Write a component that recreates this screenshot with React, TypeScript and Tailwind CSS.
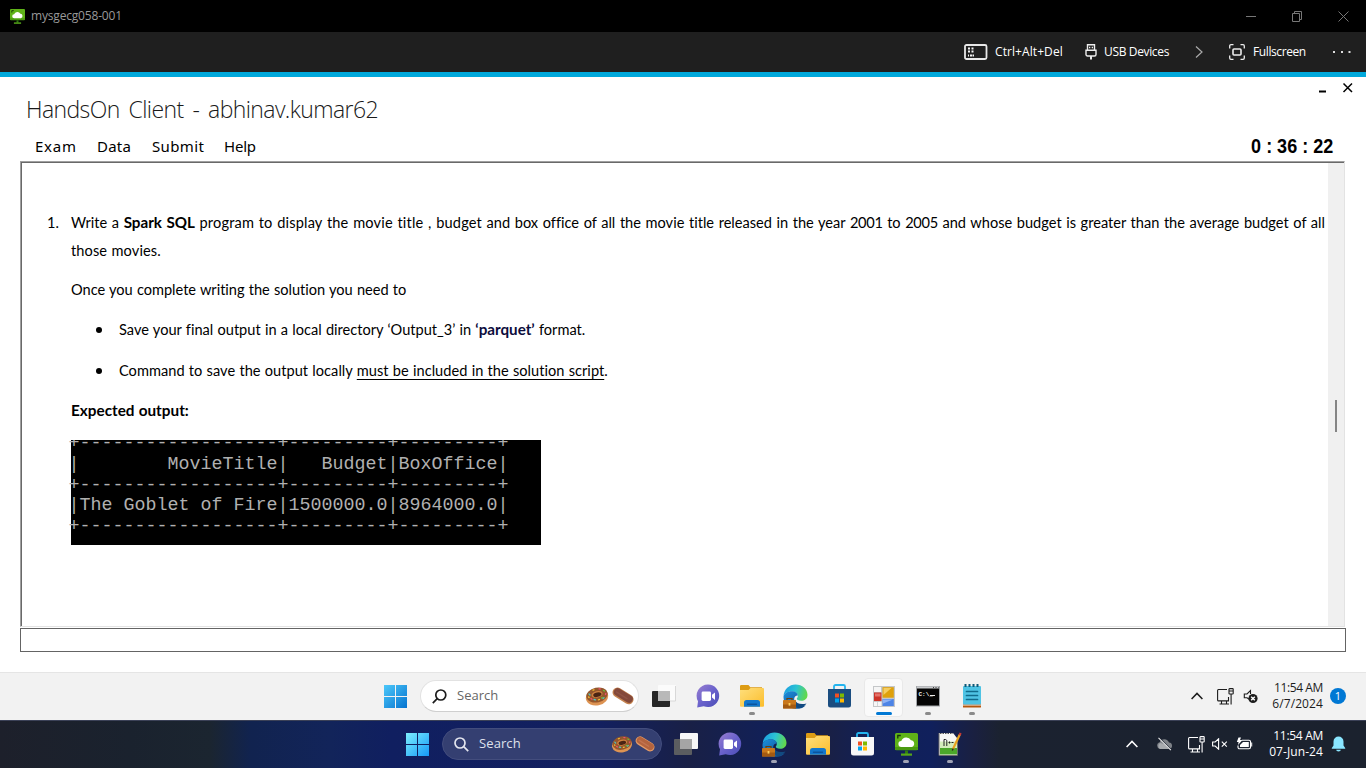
import React from "react";

type Dark = { dark?: boolean };

const WinLogo = ({ dark }: Dark) => {
  const id = dark ? "wl-d" : "wl-l";
  return (
    <svg width="23" height="23" viewBox="0 0 23 23">
      <defs>
        <linearGradient id={id} x1="0" y1="0" x2="1" y2="1" gradientUnits="objectBoundingBox">
          <stop offset="0" stopColor={dark ? "#7deefc" : "#4cc8fa"} />
          <stop offset="1" stopColor={dark ? "#1599f8" : "#0573cf"} />
        </linearGradient>
      </defs>
      <path fill={`url(#${id})`} d="M0 0h11v11H0zM12 0h11v11H12zM0 12h11v11H0zM12 12h11v11H12z" />
    </svg>
  );
};

const Donut = () => (
  <svg width="24" height="20" viewBox="0 0 24 20">
    <ellipse cx="12" cy="11" rx="11.300" ry="8.400" fill="#dd9352" transform="rotate(-12 12 11)" />
    <ellipse cx="12" cy="9" rx="10.800" ry="7.400" fill="#94562c" transform="rotate(-12 12 9)" />
    <ellipse cx="12.200" cy="8.400" rx="5.600" ry="3.300" fill="#cf8040" transform="rotate(-12 12 9)" />
    <ellipse cx="12.400" cy="8.800" rx="4.200" ry="2.200" fill="#4a2414" transform="rotate(-12 12 9)" />
    <g strokeWidth="1.300" strokeLinecap="round">
      <path stroke="#52c8c0" d="M4 8l1 1M9 13.500l1.500.3M18 12.500l1-.8" />
      <path stroke="#f0506e" d="M6 12.500l1 .8M14 2.800l1.200.2M20.500 8.500l.3-1" />
      <path stroke="#f2c230" d="M8 4.200l1-.4M13.500 13.800l1-.3M3.600 11l.5.5" />
      <path stroke="#6bbf3a" d="M18.500 4.500l1 .5M16.500 12l.8-.5" />
    </g>
  </svg>
);

const Eclair = ({ dark }: Dark) => (
  <svg width="24" height="20" viewBox="0 0 24 20">
    <rect x="0.500" y="5" width="23" height="9.800" rx="4.900" fill={dark ? "#e39a66" : "#c48350"} transform="rotate(32 12 10)" />
    <rect x="1.500" y="5.600" width="21" height="7.600" rx="3.800" fill={dark ? "#b4643e" : "#84493a"} transform="rotate(32 12 10)" />
    <path d="M5.500 6l10.500 6.600" stroke={dark ? "#c27450" : "#905445"} strokeWidth="1.400" strokeLinecap="round" />
  </svg>
);

const TaskView = ({ dark }: Dark) => (
  <svg width="24" height="23" viewBox="0 0 24 23">
    <rect x="6" y="0" width="18" height="16" rx="1" fill={dark ? "#f6f6f6" : "#fbfbfb"} />
    {!dark && <path d="M23.500 1v15H6" stroke="#d8d8d8" fill="none" />}
    <rect x="0" y="6" width="18" height="16" rx="1" fill={dark ? "#5b5d60" : "#272727"} />
    <rect x="6" y="6" width="12" height="10" fill={dark ? "#a5a5a5" : "#b9b9b9"} />
  </svg>
);

const Chat = ({ dark }: Dark) => {
  const id = dark ? "ch-d" : "ch-l";
  return (
    <svg width="24" height="24" viewBox="0 0 24 24">
      <defs>
        <linearGradient id={id} x1="0" y1="0" x2="1" y2="1">
          <stop offset="0" stopColor="#9a7fd0" />
          <stop offset=".5" stopColor="#6a62cc" />
          <stop offset="1" stopColor="#4a4db5" />
        </linearGradient>
      </defs>
      <path d="M12 .5a11.300 11.300 0 1 1-4.300 21.800L1.200 23.600 2 17.300A11.300 11.300 0 0 1 12 .5z" fill={`url(#${id})`} />
      <rect x="5.600" y="7.500" width="9.400" height="9.400" rx="1.400" fill="#fff" />
      <path d="M16 10.800l3-2.400v7.600l-3-2.400z" fill="#fff" />
    </svg>
  );
};

const Folder = ({ dark }: Dark) => {
  const id = dark ? "fo-d" : "fo-l";
  return (
    <svg width="24" height="22" viewBox="0 0 24 22">
      <defs>
        <linearGradient id={id} x1="0" y1="0" x2="1" y2="1">
          <stop offset="0" stopColor="#ffdf7c" />
          <stop offset="1" stopColor="#fbbd2c" />
        </linearGradient>
      </defs>
      <path d="M0 1.200A1.200 1.200 0 0 1 1.200 0h7.300l1.800 2.200H22v5H0z" fill="#dd9c14" />
      <path d="M0 5h8.600l1.900-2H23a1 1 0 0 1 1 1v16.800a1 1 0 0 1-1 1H1a1 1 0 0 1-1-1z" fill={`url(#${id})`} />
      <path d="M4 21.800v-4.300A2.500 2.500 0 0 1 6.500 15h11a2.500 2.500 0 0 1 2.500 2.500v4.300z" fill="#1377cc" />
      <path d="M7.500 19.300h9" stroke="#0c559d" strokeWidth="1.400" strokeLinecap="round" />
    </svg>
  );
};

const Edge = ({ dark }: Dark) => {
  const a = dark ? "ed-a1" : "ed-a2";
  const b = dark ? "ed-b1" : "ed-b2";
  return (
    <svg width="25" height="25" viewBox="0 0 25 25">
      <defs>
        <linearGradient id={a} x1="0" y1="0.300" x2="1" y2="0.500">
          <stop offset="0" stopColor="#1b9de2" />
          <stop offset=".5" stopColor="#2cc3d2" />
          <stop offset="1" stopColor="#63d948" />
        </linearGradient>
        <linearGradient id={b} x1="0" y1="0" x2="1" y2="1">
          <stop offset="0" stopColor="#1b8fdd" />
          <stop offset="1" stopColor="#114a8b" />
        </linearGradient>
      </defs>
      <path d="M.6 12A12 12 0 0 1 12.500.5c6.800 0 12 4.500 12 10.300 0 4-3 6-6.300 6-3 0-4.400-1.200-4.400-2 0-.6 1-1.200 1-3 0-2.400-2.500-4.300-6-4.300C5 7.500 1.500 9.500.6 12z" fill={`url(#${a})`} />
      <path d="M.5 12.500C1.200 9.500 4.800 7.300 8.800 7.300c3.500 0 6 2 6 4.200-3 0-4.300 2.700-3.300 5.500 1.200 3.500 5 5.200 8.400 5 1.200 0 2.300-.5 3-.8a12 12 0 0 1-9.900 3.500C5.500 24.500.2 19 .5 12.500z" fill={`url(#${b})`} />
      <path d="M12 15.500c1 4 5.500 5.500 11.500 4a12 12 0 0 1-7.500 4.800c-3-.8-5-4-4-8.800z" fill="#124a80" />
      <path d="M4 16v-1.500h5V16" stroke="#6f3f08" strokeWidth="1.200" fill="none" />
      <rect x="0" y="16" width="13" height="8.500" rx=".8" fill="#c9781c" />
      <path d="M0 20.500h13v4H0z" fill="#a35a12" />
      <rect x="5.600" y="19" width="1.800" height="2.600" fill="#ffcf5e" />
    </svg>
  );
};

const Store = ({ dark }: Dark) => (
  <svg width="23" height="24" viewBox="0 0 23 24">
    <path d="M6 6V2.500A1.500 1.500 0 0 1 7.500 1h8A1.500 1.500 0 0 1 17 2.500V6" stroke="#24b4ee" strokeWidth="1.800" fill="none" />
    <path d="M0 5h23v16a2.500 2.500 0 0 1-2.500 2.500h-18A2.500 2.500 0 0 1 0 21z" fill={dark ? "#f7f7f7" : "#1b4d80"} />
    <path d="M7 9.500h4v4H7z" fill="#f25022" />
    <path d="M12 9.500h4v4h-4z" fill="#7fba00" />
    <path d="M7 14.500h4v4H7z" fill="#00a4ef" />
    <path d="M12 14.500h4v4h-4z" fill="#ffb900" />
  </svg>
);

const FormsApp = () => (
  <svg width="22" height="21" viewBox="0 0 22 21">
    <rect width="22" height="21" fill="#c5c7c9" />
    <path d="M1 1h7v5H1z" fill="#f5f5f5" />
    <path d="M1 6.500h7.500v8.500H1z" fill="#cc3328" />
    <path d="M2 7.500h5.500v3H2z" fill="#e4736a" />
    <path d="M9.500 1.200h11.300v10.500H9.500z" fill="#dfa10c" />
    <path d="M10.500 2h8l-8 7z" fill="#f5cd61" />
    <path d="M9.500 13h11.300v7H9.500z" fill="#4d84e6" />
    <path d="M10 13.500h10l-10 4z" fill="#8fb3f5" />
    <path d="M1 16h3.300v4H1zM5 16h3.500v4H5z" fill="#f7f7f7" />
  </svg>
);

const Cmd = () => (
  <svg width="24" height="21" viewBox="0 0 24 21">
    <rect x=".5" y=".5" width="23" height="19.500" fill="#050505" stroke="#a3a6a9" />
    <path d="M1 1.500h22" stroke="#c9cbcd" strokeWidth="2" />
    <path d="M17 1.500h1M19.500 1.500h1M22 1.500h.6" stroke="#444" />
    <text x="2.500" y="9.500" fontSize="6" fontWeight="700" fontFamily="Liberation Mono, monospace" fill="#f5f5f5">C:\_</text>
    <path d="M14 9.500h5" stroke="#eee" strokeWidth="1" />
  </svg>
);

const Notepad = () => (
  <svg width="20" height="24" viewBox="0 0 20 24">
    <rect x="1" y="19" width="18" height="4.600" rx=".5" fill="#b4560e" />
    <path d="M1 20.500h18v1H1z" fill="#f5f0ec" />
    <rect x="1" y="2" width="18" height="18.500" rx="1" fill="#4fc3e4" />
    <path d="M3.500 0v3M7.500 0v3M11.500 0v3M15.500 0v3" stroke="#0f5a79" strokeWidth="2" />
    <path d="M4.500 7.500h11M4.500 11.500h11M4.500 15.500h11" stroke="#116b8c" strokeWidth="1.700" strokeLinecap="round" />
  </svg>
);

const CloudMonitor = ({ size }: { size: number }) => (
  <svg width={size} height={size} viewBox="0 0 23 23">
    <path d="M0 1.500A1.500 1.500 0 0 1 1.500 0h20A1.500 1.500 0 0 1 23 1.500V17H0z" fill="#5fb318" />
    <path d="M0 14h23v1.800a1.500 1.500 0 0 1-1.500 1.500h-20A1.500 1.500 0 0 1 0 15.800z" fill="#4a9a10" />
    <path d="M2.800 5.500V2.500h3" stroke="#17360a" strokeWidth="1.300" fill="none" />
    <path d="M10 17.500h3V21h-3z" fill="#2f7d10" />
    <path d="M6 20.500h11v2.200H6z" fill="#56a818" />
    <path d="M6.500 14a3 3 0 0 1-.2-6A5.400 5.400 0 0 1 16 7.200a3.500 3.500 0 0 1 .8 6.800z" fill="#fff" />
  </svg>
);

const NotepadPP = () => (
  <svg width="24" height="24" viewBox="0 0 24 24">
    <path d="M1 1h14l4 5v17.500H1z" fill="#f8f8f6" />
    <path d="M2 14h17v8.500H2z" fill="#4ba62a" />
    <path d="M2 9.500h17V16H2z" fill="#d3ecbb" />
    <path d="M1 1v22.500h18.500V6" stroke="#6b6b6b" fill="none" />
    <path d="M2 1.500h13" stroke="#555" strokeDasharray="1.500 1" strokeWidth="1.200" />
    <path d="M6 14V7.500h1.500c.9 0 1.300.8 1.300 1.600V14M10.500 10.500h2M11.500 9.500v2M13.500 10.500h2" stroke="#222" strokeWidth="1" fill="none" />
    <path d="M21.800 2.500L15 17" stroke="#e9a31e" strokeWidth="2.200" />
    <path d="M22.600 1l-1 2.200" stroke="#c73b35" strokeWidth="2.200" />
    <path d="M15.300 16.500l-1 2" stroke="#33261a" strokeWidth="1.300" />
  </svg>
);

const Chevron = () => (
  <svg width="12" height="8" viewBox="0 0 12 8" fill="none" stroke="currentColor" strokeWidth="1.500">
    <path d="M.6 7L6 1.400 11.400 7" />
  </svg>
);

const Network = () => (
  <svg width="17" height="17" viewBox="0 0 17 17" fill="none" stroke="currentColor" strokeWidth="1.100">
    <path d="M10 1.500H1.500A1 1 0 0 0 .6 2.500v9.400a1 1 0 0 0 1 1H11.500V9M4.500 13v3M9.500 13v3M2.500 16h9.500" />
    <rect x="12" y=".6" width="4.200" height="5.400" rx=".6" />
    <path d="M12 3h4M14.100 6v10.500" />
  </svg>
);

const SpeakerOff = () => (
  <svg width="15" height="15" viewBox="0 0 15 15">
    <path d="M6.500 10.500L4 8.800H1.300V5H4L7.500 1.500V5" stroke="#1c1c1c" strokeWidth="1.100" fill="none" />
    <circle cx="10" cy="9.500" r="4.600" fill="#1c1c1c" />
    <path d="M8.200 7.700l3.600 3.600M11.800 7.700l-3.600 3.600" stroke="#fff" strokeWidth="1.400" />
  </svg>
);

const SpeakerMute = () => (
  <svg width="16" height="12" viewBox="0 0 16 12" fill="none" stroke="#fff" strokeWidth="1.100">
    <path d="M.6 4H3.200L6.600.8v10.400L3.200 8H.6z" />
    <path d="M9.800 3.700l5 5M14.800 3.700l-5 5" />
  </svg>
);

const Battery = () => (
  <svg width="17" height="14" viewBox="0 0 17 14">
    <path d="M6 3.200h7a1.500 1.500 0 0 1 1.500 1.500v5.600a1.500 1.500 0 0 1-1.500 1.500H3.500A1.500 1.500 0 0 1 2 10.300V8.500" stroke="#fff" strokeWidth="1.100" fill="none" />
    <path d="M7 5h5.800v5H4V8z" fill="#fff" />
    <path d="M15.200 5.500h1v4h-1zM2.500.5h2.500L4 3h2.500L2 8l.6-3H.8z" fill="#fff" />
  </svg>
);

const CloudOff = () => (
  <svg width="17" height="14" viewBox="0 0 17 14">
    <path d="M4 12a3.500 3.500 0 0 1-.3-6.800A5 5 0 0 1 13 5.500 3.300 3.300 0 0 1 13.500 12z" fill="#7d8187" />
    <path d="M4 12a3.500 3.500 0 0 1 0-6c3 0 7 2 9.500 6z" fill="#a7aaae" />
    <path d="M3.500 1.200l11 11" stroke="#1b2230" strokeWidth="1.600" />
    <path d="M2.500.8l12.400 12.400" stroke="#eee" strokeWidth="1.100" />
  </svg>
);

const Bell = () => (
  <svg width="15" height="16" viewBox="0 0 15 16">
    <path d="M7.500.5a5 5 0 0 1 5 5v4l1.700 2.500v.8H.8V12l1.700-2.500v-4a5 5 0 0 1 5-5z" fill="#8ae6ff" />
    <path d="M5.200 13.800h4.600a2.300 1.800 0 0 1-4.600 0z" fill="#8ae6ff" />
  </svg>
);

const KeyboardIcon = () => (
  <svg width="24" height="16" viewBox="0 0 24 16">
    <rect x="1" y="1" width="21.500" height="14" rx="1.500" fill="none" stroke="#e8e8e8" strokeWidth="1.800" />
    <path d="M4 4.500h2M7.500 4.500h2M4 7.500h2M7.500 7.500h2M4 11.500h1M6 11.500h2.500M9 11.500h1" stroke="#f4f4f4" strokeWidth="1.800" />
  </svg>
);

const UsbIcon = () => (
  <svg width="12" height="16" viewBox="0 0 12 16" fill="none" stroke="#eee" strokeWidth="1.400">
    <path d="M2.500 6V.8h7V6M1 6.200h10v4.300a1.500 1.500 0 0 1-1.500 1.500h-7A1.500 1.500 0 0 1 1 10.500z" />
    <path d="M4 3.500h1.300M6.700 3.500H8" strokeWidth="1.500" />
    <path d="M6 12v3.500" strokeWidth="2" />
  </svg>
);

const FullscreenIcon = () => (
  <svg width="16" height="16" viewBox="0 0 16 16" fill="none" stroke="#ededed" strokeWidth="1.300">
    <path d="M4.500.7H2A1.300 1.300 0 0 0 .7 2v2.500M11.500.7H14A1.300 1.300 0 0 1 15.300 2v2.500M4.500 15.300H2A1.300 1.300 0 0 1 .7 14v-2.500M11.500 15.300H14a1.300 1.300 0 0 0 1.300-1.300v-2.500" />
    <rect x="4" y="5" width="8" height="6" rx="1" strokeWidth="1.600" />
  </svg>
);

type SlotProps = { children: React.ReactNode; state?: "open" | "active"; dark?: boolean };

const Slot = ({ children, state, dark }: SlotProps) => (
  <div className="relative flex h-full w-11 items-center justify-center">
    {state === "active" && <div className="absolute top-[5px] left-[2px] h-[39px] w-[39px] rounded-[4px] border border-[#e9e9e9] bg-[#fafafa]" />}
    <div className="relative pb-px">{children}</div>
    {state === "open" && <div className={`absolute bottom-[5px] h-[3px] w-[6px] rounded-full ${dark ? "bg-[#a0a3b5]" : "bg-[#8a8a8a]"}`} />}
    {state === "active" && <div className="absolute bottom-[5px] h-[3px] w-4 rounded-full bg-[#0078d4]" />}
  </div>
);

const RULE = "+------------------+---------+---------+";
const TERMINAL = [
  RULE,
  "|        MovieTitle|   Budget|BoxOffice|",
  RULE,
  "|The Goblet of Fire|1500000.0|8964000.0|",
  RULE,
];

export default function App() {
  return (
    <div className="flex h-[768px] w-[1366px] flex-col overflow-hidden bg-white font-['Open_Sans',sans-serif] text-black">
      <header className="flex h-8 shrink-0 items-center bg-black pl-[10px]">
        <CloudMonitor size={15} />
        <span className="ml-[6px] text-[12px] tracking-[-0.18px] whitespace-nowrap text-[#999]">mysgecg058-001</span>
        <div className="ml-auto flex w-[120px] items-center justify-between pr-[17px] text-[#777]">
          <svg width="11" height="11" viewBox="0 0 11 11"><path d="M0 5.500h10" stroke="currentColor" /></svg>
          <svg width="11" height="11" viewBox="0 0 11 11" fill="none" stroke="currentColor"><path d="M.5 2.500h7v8h-7zM2.500 2.500v-2h7v8h-2" /></svg>
          <svg width="11" height="11" viewBox="0 0 11 11"><path d="M.5.5l10 10M10.500.5l-10 10" stroke="currentColor" /></svg>
        </div>
      </header>

      <div className="flex h-10 shrink-0 items-center bg-[#1f1f1f] pl-[964px] text-[12px] whitespace-nowrap text-white">
        <KeyboardIcon />
        <span className="ml-[7px] w-[68px] tracking-[0.08px]">Ctrl+Alt+Del</span>
        <span className="ml-[22px]"><UsbIcon /></span>
        <span className="ml-[7px] w-[66px] tracking-[-0.35px]">USB Devices</span>
        <svg className="ml-[25px]" width="8" height="12" viewBox="0 0 8 12" fill="none" stroke="#aaa" strokeWidth="1.200"><path d="M1 .5L7 6l-6 5.500" /></svg>
        <span className="ml-[26px]"><FullscreenIcon /></span>
        <span className="ml-[8px] w-[53px] tracking-[-0.4px]">Fullscreen</span>
        <svg className="ml-[27px]" width="18" height="2" viewBox="0 0 18 2"><path d="M0 0h2v2H0zM8 0h2v2H8zM15.500 0h2v2h-2z" fill="#ddd" /></svg>
      </div>
      <div className="h-[5px] shrink-0 bg-[#00a9dc]" />

      <main className="flex h-[595px] shrink-0 flex-col px-5">
        <div className="flex h-[55px] shrink-0">
          <h1 className="ml-[6px] pt-[16px] text-[23px] leading-8 font-light tracking-[-0.6px] whitespace-nowrap text-[#1a1a1a] [word-spacing:3.5px]">
            HandsOn Client - abhinav.kumar62
          </h1>
          <svg className="mt-[5px] mr-[-8px] ml-auto" width="36" height="12" viewBox="0 0 36 12">
            <path d="M1 9.500h7" stroke="#000" strokeWidth="2" />
            <path d="M25.500 1.500l8.500 8.500M34 1.500L25.500 10" stroke="#000" strokeWidth="1.500" />
          </svg>
        </div>
        <div className="flex h-[29px] shrink-0 items-center pr-[13px] pb-[2px] pl-[15px] font-['Noto_Sans',sans-serif] text-[15px] leading-[20px] whitespace-nowrap">
          <span className="w-[62px] tracking-[0.75px]">Exam</span>
          <span className="w-[55px] tracking-[0.25px]">Data</span>
          <span className="w-[72px] tracking-[0.35px]">Submit</span>
          <span className="tracking-[-0.2px]">Help</span>
          <span className="ml-auto origin-right scale-x-[0.9] pt-px font-['Liberation_Sans',sans-serif] text-[20px] font-bold">0 : 36 : 22</span>
        </div>

        <section className="flex h-[466px] w-[1325px] shrink-0 border border-t-[#a0a0a0] border-r-[#e3e3e3] border-b-[#e3e3e3] border-l-[#a0a0a0]">
          <div className="flex-1 border-t border-l border-[#696969] pt-[46px] pl-[25px] font-['Lato',sans-serif] text-[14.6px] leading-7 whitespace-nowrap [font-variant-ligatures:none] [word-spacing:0.5px]">
            <div className="flex">
              <span className="w-6 shrink-0">1.</span>
              <div>
                <p className="w-[1254px] text-justify [text-align-last:justify]">
                  Write a <b className="text-[15.2px] leading-none">Spark SQL</b> <span className="tracking-[0.15px]">program to display the movie title , budget</span> and box office of all the movie title released in the year <span className="tracking-[-0.3px]">2001</span> to <span className="tracking-[-0.3px]">2005</span> and whose budget is greater than the average budget of all
                </p>
                <p className="tracking-[0.1px]">those movies.</p>
                <p className="mt-[11px] tracking-[-0.02px]">Once you complete writing the solution you need to</p>
                <div className="mt-[12px] flex items-center pl-[25px]">
                  <i className="mr-[17px] h-[6px] w-[6px] rounded-full bg-black" />
                  <p>Save your final output in a local directory ‘Output_3’ in <b className="text-[15.2px] leading-none text-[#0c0c3c]">‘parquet’</b> format.</p>
                </div>
                <div className="mt-[13px] flex items-center pl-[25px]">
                  <i className="mr-[17px] h-[6px] w-[6px] rounded-full bg-black" />
                  <p className="tracking-[0.02px]">Command to save the output locally <u className="underline-offset-[3px]">must be included in the solution script</u>.</p>
                </div>
                <p className="mt-[11px] text-[15.300px] font-bold">Expected output:</p>
                <pre className="mt-[16px] flex h-[105px] w-[470px] flex-col overflow-y-clip bg-black font-['Liberation_Mono',monospace] text-[18.330px] leading-[20.8px] text-[#b0b0b0] [word-spacing:0]">
                  {TERMINAL.map((line, i) => (
                    <span key={i} className={i === 0 ? "-mt-[6px] -ml-[2.5px] h-[20.8px] shrink-0" : "-ml-[2.5px] h-[20.8px] shrink-0"}>{line}</span>
                  ))}
                </pre>
              </div>
            </div>
          </div>
          <div className="w-4 border-t border-t-[#696969] bg-[#f0f0f0] pt-[237px]">
            <div className="ml-[7px] h-8 w-[2px] bg-[#858585]" />
          </div>
        </section>
        <div className="mt-px h-6 w-[1326px] shrink-0 border border-[#646464]" />
      </main>

      <div className="flex h-12 shrink-0 border-t border-[#e5e5e5] bg-[#f2f2f2] pl-[384px] text-[#1c1c1c]">
        <div className="flex h-full w-9 items-center"><WinLogo /></div>
        <div className="mt-[7px] flex h-8 w-[219px] items-center rounded-full border border-[#e2e2e2] border-b-[#cfcfcf] bg-white pl-[11px]">
          <svg width="15" height="15" viewBox="0 0 15 15" fill="none" stroke="#1c1c1c" strokeWidth="1.700"><circle cx="8.800" cy="6" r="5" /><path d="M5.200 9.700L.8 14.200" /></svg>
          <span className="ml-[10px] text-[13px] text-[#666]">Search</span>
          <span className="ml-auto"><Donut /></span>
          <span className="mr-[3px] ml-[2px]"><Eclair /></span>
        </div>
        <div className="ml-[2.500px] flex h-full">
          <Slot><TaskView /></Slot>
          <Slot><Chat /></Slot>
          <Slot state="open"><Folder /></Slot>
          <Slot><Edge /></Slot>
          <Slot><Store /></Slot>
          <Slot state="active"><FormsApp /></Slot>
          <Slot state="open"><Cmd /></Slot>
          <Slot state="open"><Notepad /></Slot>
        </div>
        <div className="ml-auto flex h-full items-center pr-[20px] pb-px">
          <Chevron />
          <span className="ml-[14px]"><Network /></span>
          <span className="ml-[9px]"><SpeakerOff /></span>
          <div className="ml-[13px] w-[52px] text-right text-[12px] leading-4 whitespace-nowrap">
            <p className="tracking-[-0.38px]">11:54 AM</p>
            <p className="tracking-[0.1px]">6/7/2024</p>
          </div>
          <span className="ml-[7px] flex h-4 w-4 items-center justify-center rounded-full bg-[#0078d4] text-[11px] leading-4 text-white">1</span>
        </div>
      </div>

      <div className="flex h-12 shrink-0 border-t border-[#3b4157] bg-[linear-gradient(90deg,#1d202b_0px,#1a222e_130px,#1b2530_210px,#11234f_250px,#12245a_330px,#101f60_390px,#13205f_600px,#192046_690px,#122056_760px,#192046_830px,#122056_870px,#10205c_930px,#1a2040_975px,#1b2230_1000px,#1b222e_1366px)] pl-[406px] text-white">
        <div className="flex h-full w-9 items-center"><WinLogo dark /></div>
        <div className="mt-[7px] flex h-8 w-[220px] items-center rounded-full border border-[#434d7d] bg-[#343f71] pl-[11px]">
          <svg width="15" height="15" viewBox="0 0 15 15" fill="none" stroke="#e4e6ef" strokeWidth="1.700"><circle cx="6" cy="6" r="5" /><path d="M9.700 9.700l4.500 4.500" /></svg>
          <span className="ml-[10px] text-[13px] tracking-[0.1px] text-[#dfe1ec]">Search</span>
          <span className="mr-[-1px] ml-auto scale-90"><Donut /></span>
          <span className="mr-[4px] scale-90"><Eclair dark /></span>
        </div>
        <div className="ml-[2px] flex h-full">
          <Slot><TaskView dark /></Slot>
          <Slot><Chat dark /></Slot>
          <Slot state="open" dark><Edge dark /></Slot>
          <Slot><Folder dark /></Slot>
          <Slot><Store dark /></Slot>
          <Slot state="open" dark><CloudMonitor size={23} /></Slot>
          <Slot state="open" dark><NotepadPP /></Slot>
        </div>
        <div className="ml-auto flex h-full items-center pr-[20px] pb-px">
          <Chevron />
          <span className="ml-[18px]"><CloudOff /></span>
          <span className="ml-[15px]"><Network /></span>
          <span className="ml-[7px]"><SpeakerMute /></span>
          <span className="ml-[8px]"><Battery /></span>
          <div className="ml-[13px] w-[57px] text-right text-[12px] leading-4 whitespace-nowrap">
            <p className="tracking-[-0.3px]">11:54 AM</p>
            <p className="tracking-[0.08px]">07-Jun-24</p>
          </div>
          <span className="ml-[8px]"><Bell /></span>
        </div>
      </div>
    </div>
  );
}
